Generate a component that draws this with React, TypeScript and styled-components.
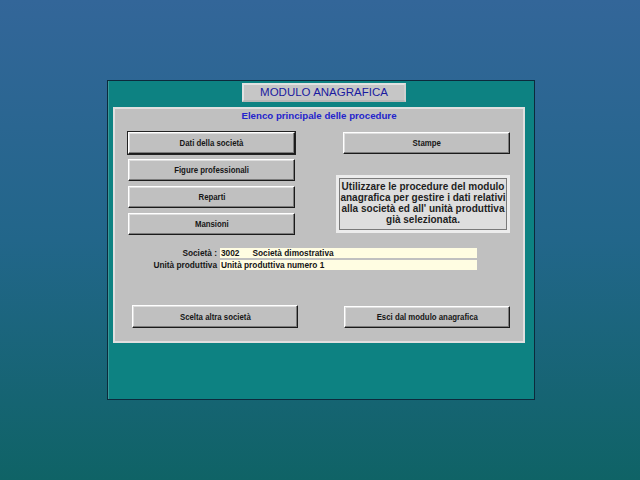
import React from "react";
import styled, { createGlobalStyle } from "styled-components";

const Global = createGlobalStyle`
  html, body {
    margin: 0;
    padding: 0;
    height: 100%;
  }
  body {
    background: linear-gradient(180deg, #336699 0%, #22668a 50%, #0f6366 100%);
    font-family: "Liberation Sans", Arial, sans-serif;
  }
`;

const Root = styled.div`
  box-sizing: border-box;
  width: 640px;
  height: 480px;
  padding: 80px 0 0 107px;
`;

const Frame = styled.div`
  box-sizing: border-box;
  width: 428px;
  height: 320px;
  background: #0d8282;
  border: 1px solid #0c2a3c;
  box-shadow: inset 1px 0 0 #3a9a9a;
  padding: 2px 8px 0 5px;
  display: flex;
  flex-direction: column;
`;

const TitleRow = styled.div`
  display: flex;
  padding-left: 129px;
  margin-bottom: 5px;
`;

const TitleBox = styled.div`
  box-sizing: border-box;
  width: 164px;
  height: 19px;
  background: #c6c6c6;
  border: 2px solid #e2e2e2;
  border-bottom-color: #b8b8b8;
  border-right-color: #d0d0d0;
  color: #1a1aa0;
  font-size: 11.5px;
  line-height: 15px;
  text-align: center;
`;

const Panel = styled.div`
  box-sizing: border-box;
  width: 412px;
  height: 236px;
  background: #c0c0c0;
  border: 2px solid #e0e0e0;
  display: flex;
  flex-direction: column;
`;

const Heading = styled.div`
  margin-top: 1px;
  height: 12px;
  line-height: 12px;
  text-align: center;
  color: #2424cc;
  font-weight: bold;
  font-size: 9.7px;
`;

const MainGrid = styled.div`
  margin-top: 10px;
  padding-left: 13px;
  display: grid;
  grid-template-columns: 167px 48px 167px;
  align-items: start;
`;

const Column = styled.div`
  display: flex;
  flex-direction: column;
  gap: 5px;
`;

const RightColumn = styled.div`
  grid-column: 3;
  display: flex;
  flex-direction: column;
`;

const Button = styled.div<{ $default?: boolean; $w?: number; $h?: number }>`
  box-sizing: border-box;
  width: ${(p) => (p.$w ? `${p.$w}px` : "100%")};
  height: ${(p) => p.$h ?? 22}px;
  background: #c0c0c0;
  border-top: 1px solid #ffffff;
  border-left: 1px solid #ffffff;
  border-right: 1px solid #1a1a1a;
  border-bottom: 1px solid #1a1a1a;
  box-shadow: inset -1px -1px 0 #7c7c7c, inset 1px 1px 0 #dedede
    ${(p) => (p.$default ? ", 0 0 0 1px #222" : "")};
  display: flex;
  align-items: center;
  justify-content: center;
  white-space: nowrap;
`;

const ButtonLabel = styled.span`
  display: inline-block;
  font-size: 8.7px;
  font-weight: bold;
  color: #161616;
  transform: scaleX(0.9);
`;

const InfoBox = styled.div`
  box-sizing: border-box;
  margin-top: 21px;
  margin-left: -7px;
  width: 174px;
  height: 58px;
  background: #dedede;
  border: 3px solid #ececec;
  box-shadow: inset 0 0 0 1px #7a7a7a;
  padding-top: 3px;
  text-align: center;
  font-size: 10px;
  font-weight: bold;
  line-height: 11px;
  color: #1e1e1e;
`;

const Fields = styled.div`
  margin-top: 13px;
  display: grid;
  grid-template-columns: 102px 257px;
  column-gap: 3px;
  row-gap: 2px;
  grid-auto-rows: 10px;
`;

const Label = styled.div`
  text-align: right;
  font-size: 8.3px;
  font-weight: bold;
  line-height: 10px;
  color: #161616;
  white-space: nowrap;
`;

const Field = styled.div`
  background: #fffde2;
  font-size: 8.3px;
  font-weight: bold;
  line-height: 10px;
  color: #141414;
  padding-left: 1px;
  white-space: nowrap;
  display: flex;
`;

const FieldPart = styled.span<{ $gap?: number }>`
  margin-left: ${(p) => p.$gap ?? 0}px;
`;

const BottomRow = styled.div`
  margin-top: 35px;
  padding-left: 17px;
  display: flex;
  align-items: flex-start;
  gap: 46px;
`;

const Shift = styled.div`
  margin-top: 1px;
`;

export default function App() {
  return (
    <>
      <Global />
      <Root>
        <Frame>
          <TitleRow>
            <TitleBox>MODULO ANAGRAFICA</TitleBox>
          </TitleRow>
          <Panel>
            <Heading>Elenco principale delle procedure</Heading>
            <MainGrid>
              <Column>
                <Button $default>
                  <ButtonLabel>Dati della società</ButtonLabel>
                </Button>
                <Button>
                  <ButtonLabel>Figure professionali</ButtonLabel>
                </Button>
                <Button>
                  <ButtonLabel>Reparti</ButtonLabel>
                </Button>
                <Button>
                  <ButtonLabel>Mansioni</ButtonLabel>
                </Button>
              </Column>
              <RightColumn>
                <Button>
                  <ButtonLabel>Stampe</ButtonLabel>
                </Button>
                <InfoBox>
                  Utilizzare le procedure del modulo
                  <br />
                  anagrafica per gestire i dati relativi
                  <br />
                  alla società ed all' unità produttiva
                  <br />
                  già selezionata.
                </InfoBox>
              </RightColumn>
            </MainGrid>
            <Fields>
              <Label>Società :</Label>
              <Field>
                <FieldPart>3002</FieldPart>
                <FieldPart $gap={13}>Società dimostrativa</FieldPart>
              </Field>
              <Label>Unità produttiva</Label>
              <Field>
                <FieldPart>Unità produttiva numero 1</FieldPart>
              </Field>
            </Fields>
            <BottomRow>
              <Button $w={166} $h={23}>
                <ButtonLabel>Scelta altra società</ButtonLabel>
              </Button>
              <Shift>
                <Button $w={166}>
                  <ButtonLabel>Esci dal modulo anagrafica</ButtonLabel>
                </Button>
              </Shift>
            </BottomRow>
          </Panel>
        </Frame>
      </Root>
    </>
  );
}
